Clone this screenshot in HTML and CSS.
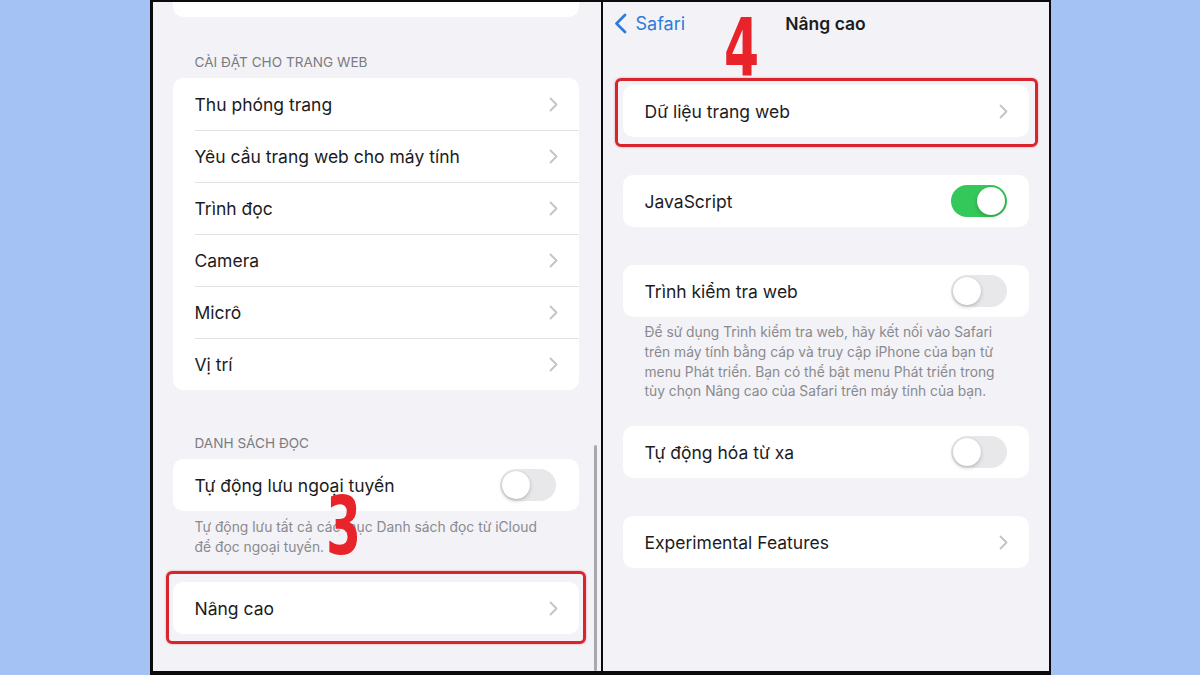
FILE: index.html
```html
<!DOCTYPE html>
<html lang="vi">
<head>
    <meta charset="UTF-8">
    <meta name="viewport" content="width=device-width, initial-scale=1.0">
    <title>Safari - Nâng cao</title>
    <link rel="stylesheet" href="styles.css">
</head>
<body>
    <div class="frame">
        <section class="panel panel-left">
            <div class="card card-cut"></div>

            <h3 class="group-title">CÀI ĐẶT CHO TRANG WEB</h3>
            <div class="card">
                <div class="row"><span>Thu phóng trang</span><svg class="chevron" viewBox="0 0 9 15"><polyline points="1.5,1.5 7.5,7.5 1.5,13.5"/></svg></div>
                <div class="row"><span>Yêu cầu trang web cho máy tính</span><svg class="chevron" viewBox="0 0 9 15"><polyline points="1.5,1.5 7.5,7.5 1.5,13.5"/></svg></div>
                <div class="row"><span>Trình đọc</span><svg class="chevron" viewBox="0 0 9 15"><polyline points="1.5,1.5 7.5,7.5 1.5,13.5"/></svg></div>
                <div class="row"><span>Camera</span><svg class="chevron" viewBox="0 0 9 15"><polyline points="1.5,1.5 7.5,7.5 1.5,13.5"/></svg></div>
                <div class="row"><span>Micrô</span><svg class="chevron" viewBox="0 0 9 15"><polyline points="1.5,1.5 7.5,7.5 1.5,13.5"/></svg></div>
                <div class="row"><span>Vị trí</span><svg class="chevron" viewBox="0 0 9 15"><polyline points="1.5,1.5 7.5,7.5 1.5,13.5"/></svg></div>
            </div>

            <h3 class="group-title second">DANH SÁCH ĐỌC</h3>
            <div class="card">
                <div class="row"><span>Tự động lưu ngoại tuyến</span><span class="switch"></span></div>
            </div>
            <p class="note">Tự động lưu tất cả các mục Danh sách đọc từ iCloud<br>để đọc ngoại tuyến.</p>

            <div class="card card-last highlight highlight-left">
                <div class="row"><span>Nâng cao</span><svg class="chevron" viewBox="0 0 9 15"><polyline points="1.5,1.5 7.5,7.5 1.5,13.5"/></svg></div>
            </div>

            <span class="step step-3">3</span>
            <div class="scrollbar"></div>
        </section>

        <section class="panel panel-right">
            <nav class="navbar">
                <a class="back">
                    <svg class="back-icon" viewBox="0 0 13 21"><polyline points="11,2 2.5,10.5 11,19"/></svg>
                    Safari
                </a>
                <h1 class="nav-title">Nâng cao</h1>
                <span></span>
            </nav>

            <div class="card first highlight highlight-right">
                <div class="row"><span>Dữ liệu trang web</span><svg class="chevron" viewBox="0 0 9 15"><polyline points="1.5,1.5 7.5,7.5 1.5,13.5"/></svg></div>
            </div>

            <div class="card spaced">
                <div class="row"><span>JavaScript</span><span class="switch on"></span></div>
            </div>

            <div class="card spaced">
                <div class="row"><span>Trình kiểm tra web</span><span class="switch"></span></div>
            </div>
            <p class="note">Để sử dụng Trình kiểm tra web, hãy kết nối vào Safari<br>trên máy tính bằng cáp và truy cập iPhone của bạn từ<br>menu Phát triển. Bạn có thể bật menu Phát triển trong<br>tùy chọn Nâng cao của Safari trên máy tính của bạn.</p>

            <div class="card after-note">
                <div class="row"><span>Tự động hóa từ xa</span><span class="switch"></span></div>
            </div>

            <div class="card spaced">
                <div class="row"><span>Experimental Features</span><svg class="chevron" viewBox="0 0 9 15"><polyline points="1.5,1.5 7.5,7.5 1.5,13.5"/></svg></div>
            </div>

            <span class="step step-4">4</span>
        </section>
    </div>
</body>
</html>
```

FILE: styles.css
```css
body {
    margin: 0;
    height: 675px;
    overflow: hidden;
    background: #a4c2f4;
    font-family: Inter, "Noto Sans", sans-serif;
    color: #1c1c1e;
}
.frame {
    width: 901px;
    height: 675px;
    margin: 0 auto;
    display: flex;
    box-sizing: border-box;
    border: 2px solid #0b0b0b;
    border-left-width: 3px;
    border-bottom-width: 4px;
    background: #f2f2f7;
}
.panel {
    position: relative;
    overflow: hidden;
}
.panel-left {
    flex: 0 0 450px;
    padding: 0 22px 0 20px;
    box-sizing: border-box;
    border-right: 2px solid #0b0b0b;
}
.panel-right {
    flex: 1;
    padding: 0 20px;
}
.card {
    background: #fff;
    border-radius: 10px;
    position: relative;
}
.card-cut {
    height: 15px;
    border-radius: 0 0 10px 10px;
}
.group-title {
    margin: 37px 0 8px;
    padding-left: 22px;
    font-size: 13.6px;
    font-weight: 400;
    line-height: 16px;
    color: #7c7c80;
}
.group-title.second {
    margin-top: 45px;
}
.row {
    height: 52px;
    box-sizing: border-box;
    margin-left: 22px;
    padding-right: 21px;
    display: flex;
    align-items: center;
    justify-content: space-between;
    font-size: 17.5px;
}
.row + .row {
    border-top: 1px solid #e2e2e6;
}
.chevron {
    width: 9px;
    height: 15px;
    fill: none;
    stroke: #c3c3c7;
    stroke-width: 1.8;
    stroke-linecap: round;
    stroke-linejoin: round;
}
.switch {
    width: 56px;
    height: 32px;
    border-radius: 16px;
    background: #e8e8ea;
    position: relative;
    margin-right: 1px;
}
.switch::after {
    content: "";
    position: absolute;
    top: 2px;
    left: 2px;
    width: 28px;
    height: 28px;
    border-radius: 50%;
    background: #fff;
    box-shadow: 0 2px 4px rgba(0,0,0,0.18), 0 0 1px rgba(0,0,0,0.2);
}
.panel-left .switch {
    margin-right: 2px;
}
.switch.on {
    background: #34c759;
}
.switch.on::after {
    left: 26px;
}
.note {
    margin: 0;
    padding: 6px 22px 0;
    font-size: 13.85px;
    line-height: 20px;
    color: #8a8a8e;
    white-space: nowrap;
}
.panel-right .note {
    font-size: 13.8px;
    line-height: 19.8px;
    padding-right: 0;
}
.card-last {
    margin-top: 25px;
}
.after-note {
    margin-top: 24px;
}
.card.spaced {
    margin-top: 38px;
}
.navbar {
    height: 42px;
    display: grid;
    grid-template-columns: 1fr auto 1fr;
    align-items: center;
    margin: 0 -20px 41px;
    padding: 0 11px;
}
.back {
    display: flex;
    align-items: center;
    gap: 9px;
    color: #2f7bd8;
    font-size: 18px;
}
.back-icon {
    width: 13px;
    height: 21px;
    fill: none;
    stroke: #2f7bd8;
    stroke-width: 2.8;
    stroke-linecap: round;
    stroke-linejoin: round;
}
.nav-title {
    margin: 0;
    font-size: 17.5px;
    font-weight: 600;
}
.highlight::before {
    content: "";
    position: absolute;
    border: 3px solid #d8252c;
    border-radius: 6px;
    box-shadow: 0 0 2px rgba(216,37,44,0.5);
}
.highlight-left::before {
    top: -11px;
    bottom: -10px;
    left: -7px;
    right: -7px;
}
.highlight-right::before {
    top: -7px;
    bottom: -10px;
    left: -8px;
    right: -9px;
}
.step {
    position: absolute;
    font-family: "Liberation Sans Narrow", "DejaVu Sans Condensed", sans-serif;
    font-weight: 700;
    font-size: 80px;
    line-height: 1;
    color: #e8232a;
    transform: scaleX(0.7);
    transform-origin: left top;
}
.step-3 {
    left: 173px;
    top: 485px;
}
.step-4 {
    left: 121px;
    top: 7px;
}
.scrollbar {
    position: absolute;
    left: 441px;
    top: 443px;
    width: 3px;
    height: 226px;
    border-radius: 2px;
    background: #a9a9ad;
}
```
